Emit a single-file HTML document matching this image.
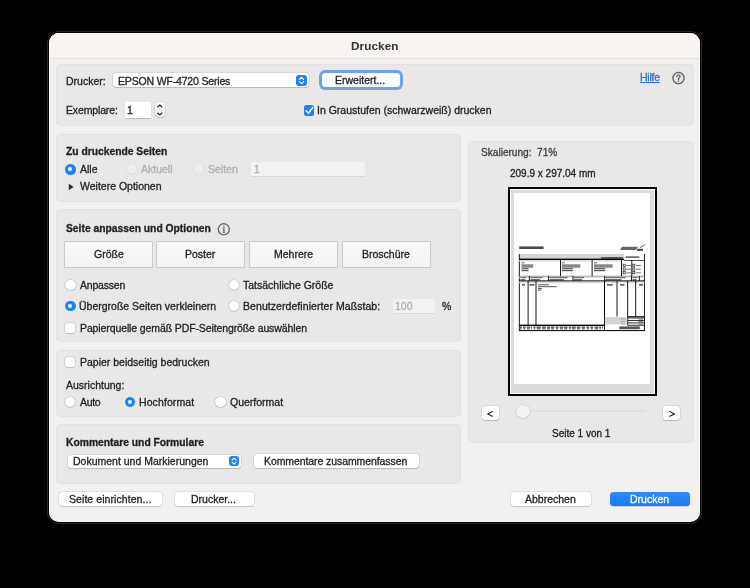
<!DOCTYPE html>
<html><head><meta charset="utf-8">
<style>
html,body{margin:0;padding:0;}
body{width:750px;height:588px;background:#000;position:relative;overflow:hidden;font-family:"Liberation Sans",sans-serif;color:#1f1f1f;}
.a{position:absolute;}
.t{position:absolute;font-size:10.5px;line-height:12px;white-space:nowrap;-webkit-text-stroke:0.3px currentColor;will-change:transform;}
.b{font-weight:bold;}
.pan{position:absolute;background:#e9e8e6;border-radius:5px;box-shadow:inset 0 0 0 0.8px rgba(0,0,0,0.03);}
.radio{position:absolute;border-radius:50%;background:#fff;box-shadow:0 0 0 0.6px rgba(0,0,0,0.18),0 0.5px 1px rgba(0,0,0,0.12);}
.radio.on{background:#1a82fb;box-shadow:none;}
.radio.on::after{content:"";position:absolute;left:3.3px;top:3.3px;width:4px;height:4px;border-radius:50%;background:#fff;}
.radio.off{background:#efeeed;box-shadow:0 0 0 0.6px rgba(0,0,0,0.08);}
.chk{position:absolute;border-radius:2.5px;background:#fff;box-shadow:0 0 0 0.6px rgba(0,0,0,0.16),0 0.5px 1px rgba(0,0,0,0.1);}
.btn{position:absolute;background:#fff;border-radius:3.5px;box-shadow:0 0 0 0.5px rgba(0,0,0,0.14),0 1px 1px rgba(0,0,0,0.14);}
.seg{position:absolute;background:linear-gradient(#f8f8f8,#f3f3f3);border:1px solid #c9c9c9;box-sizing:border-box;}
.dis{color:#b0afae;}
</style></head><body>
<div class="a" style="left:49px;top:33px;width:651px;height:489px;border-radius:10px;background:#f2f1ef;box-shadow:0 0 0 1px #000,0 0 0 2px #262626;"></div>
<div class="a" style="left:49px;top:33px;width:651px;height:25px;border-radius:10px 10px 0 0;background:#f7f4f1;border-bottom:1px solid #e2dfdc;"></div>
<div class="a" style="left:49px;top:33px;width:651px;height:489px;border-radius:10px;box-shadow:inset 0 0 0 0.8px rgba(255,255,255,0.7);box-sizing:border-box;"></div>
<div class="t b" style="left:351px;top:40px;font-size:11.7px;color:#333;-webkit-text-stroke:0;letter-spacing:0.1px;">Drucken</div>
<div class="pan" style="left:56px;top:64px;width:638px;height:62px;"></div>
<div class="t" style="left:66px;top:75px;">Drucker:</div>
<div class="btn" style="left:113px;top:73px;width:195.8px;height:14px;"></div>
<div class="a" style="left:296px;top:74.5px;width:11px;height:11px;border-radius:3px;background:#1a82fb;"></div>
<svg class="a" style="left:296px;top:74.5px" width="11" height="11"><path d="M3.4 4.3 L5.5 2.4 L7.6 4.3 M3.4 6.7 L5.5 8.6 L7.6 6.7" stroke="#fff" stroke-width="1.1" fill="none" stroke-linecap="round" stroke-linejoin="round"/></svg>
<div class="t" style="left:118px;top:75px;letter-spacing:-0.17px;">EPSON WF-4720 Series</div>
<div class="a" style="left:318.5px;top:70px;width:84px;height:19.5px;border-radius:6px;background:#6fa2e8;"></div>
<div class="a" style="left:321.5px;top:73px;width:78.5px;height:13.7px;border-radius:3.5px;background:#fff;"></div>
<div class="t" style="left:335px;top:74px;">Erweitert...</div>
<div class="t" style="left:640px;top:71px;color:#2c72d9;letter-spacing:-0.25px;text-decoration:underline;">Hilfe</div>
<svg class="a" style="left:668px;top:68px" width="22" height="20" viewBox="668 68 22 20"><circle cx="678.5" cy="78.1" r="5.6" stroke="#676767" stroke-width="1.45" fill="none"/><path d="M676.8 76.6 Q676.9 75 678.5 75 Q680.1 75 680.1 76.5 Q680.1 77.4 679.1 78 Q678.5 78.4 678.5 79.3 V79.7" stroke="#555" stroke-width="1.15" fill="none" stroke-linecap="round"/><circle cx="678.5" cy="81.2" r="0.7" fill="#555"/></svg>
<div class="t" style="left:65.8px;top:104px;letter-spacing:-0.14px;">Exemplare:</div>
<div class="a" style="left:124.5px;top:102px;width:26px;height:16px;background:#fff;box-shadow:0 0.5px 1px rgba(0,0,0,0.2);"></div>
<div class="t" style="left:127px;top:104px;">1</div>
<div class="btn" style="left:155px;top:102px;width:9.6px;height:15.4px;border-radius:4px;"></div>
<svg class="a" style="left:155px;top:102px" width="10" height="16"><path d="M2.6 5 L4.8 3 L7 5 M2.6 11 L4.8 13 L7 11" stroke="#222" stroke-width="1.1" fill="none" stroke-linecap="round" stroke-linejoin="round"/><path d="M0.5 7.5 H9.5" stroke="#e4e4e4" stroke-width="0.6"/></svg>
<div class="a" style="left:303.5px;top:104.8px;width:10.7px;height:10.8px;border-radius:2.5px;background:#1a82fb;"></div>
<svg class="a" style="left:303.5px;top:104.8px" width="11" height="11"><path d="M2.1 5.9 L4.5 8.3 L8.6 2.5" stroke="#fff" stroke-width="1.5" fill="none" stroke-linecap="round" stroke-linejoin="round"/></svg>
<div class="t" style="left:317.4px;top:104px;">In Graustufen (schwarzweiß) drucken</div>
<div class="pan" style="left:56px;top:133.5px;width:405px;height:68px;"></div>
<div class="t b" style="left:66px;top:146px;font-size:10.3px;">Zu druckende Seiten</div>
<div class="radio on" style="left:65px;top:164px;width:10.6px;height:10.6px;"></div>
<div class="t" style="left:79.5px;top:163px;">Alle</div>
<div class="radio off" style="left:126.5px;top:164px;width:10px;height:10px;"></div>
<div class="t dis" style="left:141px;top:163px;">Aktuell</div>
<div class="radio off" style="left:194px;top:164px;width:10px;height:10px;"></div>
<div class="t dis" style="left:208px;top:163px;">Seiten</div>
<div class="a" style="left:250.8px;top:162px;width:114.2px;height:14.2px;background:#f4f3f2;box-shadow:0 0.5px 0.6px rgba(0,0,0,0.07);"></div>
<div class="t dis" style="left:254px;top:163px;">1</div>
<svg class="a" style="left:68px;top:183px" width="7" height="8"><path d="M0.8 0.8 L5.6 3.9 L0.8 7 Z" fill="#262626"/></svg>
<div class="t" style="left:80px;top:180px;">Weitere Optionen</div>
<div class="pan" style="left:56px;top:209px;width:405px;height:133px;"></div>
<div class="t b" style="left:66px;top:223px;font-size:10.3px;">Seite anpassen und Optionen</div>
<svg class="a" style="left:214px;top:220px" width="20" height="20" viewBox="214 220 20 20"><circle cx="223.8" cy="229.3" r="5.55" stroke="#6a6a6a" stroke-width="1.4" fill="none"/><rect x="223.1" y="226" width="1.5" height="1.4" fill="#666"/><path d="M222.5 228.2 H224.6 V232.3 H225.2 V233 H222.6 V232.3 H223.2 V228.9 H222.5 Z" fill="#666"/></svg>
<div class="seg" style="left:64px;top:241px;width:89px;height:26.5px;border-radius:1px;"></div>
<div class="t" style="left:94px;top:248px;">Größe</div>
<div class="seg" style="left:156px;top:241px;width:89px;height:26.5px;border-radius:1px;"></div>
<div class="t" style="left:185px;top:248px;">Poster</div>
<div class="seg" style="left:249px;top:241px;width:89px;height:26.5px;border-radius:1px;"></div>
<div class="t" style="left:274px;top:248px;">Mehrere</div>
<div class="seg" style="left:341.5px;top:241px;width:89px;height:26.5px;border-radius:1px;"></div>
<div class="t" style="left:362px;top:248px;">Broschüre</div>
<div class="radio" style="left:65.2px;top:279.5px;width:10.4px;height:10.4px;"></div>
<div class="t" style="left:79.6px;top:279px;letter-spacing:-0.2px;">Anpassen</div>
<div class="radio" style="left:228.7px;top:279.5px;width:10.4px;height:10.4px;"></div>
<div class="t" style="left:242.8px;top:279px;">Tatsächliche Größe</div>
<div class="radio on" style="left:65.2px;top:300.7px;width:10.6px;height:10.6px;"></div>
<div class="t" style="left:79.3px;top:300px;">Übergroße Seiten verkleinern</div>
<div class="radio" style="left:228.7px;top:300.7px;width:10.4px;height:10.4px;"></div>
<div class="t" style="left:242.6px;top:300px;letter-spacing:0.065px;">Benutzerdefinierter Maßstab:</div>
<div class="a" style="left:392.5px;top:299px;width:42.5px;height:14.2px;background:#f4f3f2;box-shadow:0 0.5px 0.6px rgba(0,0,0,0.07);"></div>
<div class="t dis" style="left:395px;top:300px;">100</div>
<div class="t" style="left:441.5px;top:300px;">%</div>
<div class="chk" style="left:65.3px;top:323.3px;width:10px;height:10px;"></div>
<div class="t" style="left:79.6px;top:322px;letter-spacing:-0.11px;">Papierquelle gemäß PDF-Seitengröße auswählen</div>
<div class="pan" style="left:56px;top:349.5px;width:405px;height:67px;"></div>
<div class="chk" style="left:65.3px;top:357.2px;width:10px;height:10px;"></div>
<div class="t" style="left:79.8px;top:356px;">Papier beidseitig bedrucken</div>
<div class="t" style="left:66px;top:379px;">Ausrichtung:</div>
<div class="radio" style="left:65px;top:396.7px;width:10.4px;height:10.4px;"></div>
<div class="t" style="left:79.8px;top:396px;letter-spacing:-0.3px;">Auto</div>
<div class="radio on" style="left:124.9px;top:396.7px;width:10.6px;height:10.6px;"></div>
<div class="t" style="left:139px;top:396px;letter-spacing:0.1px;">Hochformat</div>
<div class="radio" style="left:215.4px;top:396.7px;width:10.4px;height:10.4px;"></div>
<div class="t" style="left:229.8px;top:396px;">Querformat</div>
<div class="pan" style="left:56px;top:424px;width:405px;height:59.5px;"></div>
<div class="t b" style="left:66px;top:437px;font-size:10.3px;">Kommentare und Formulare</div>
<div class="btn" style="left:67.5px;top:454.5px;width:173.5px;height:13.5px;"></div>
<div class="a" style="left:229px;top:455.8px;width:10.2px;height:10.2px;border-radius:3px;background:#1a82fb;"></div>
<svg class="a" style="left:229px;top:455.8px" width="11" height="11"><path d="M3.1 4 L5.1 2.2 L7.1 4 M3.1 6.2 L5.1 8 L7.1 6.2" stroke="#fff" stroke-width="1.05" fill="none" stroke-linecap="round" stroke-linejoin="round"/></svg>
<div class="t" style="left:73px;top:455px;">Dokument und Markierungen</div>
<div class="btn" style="left:253.5px;top:454px;width:165px;height:14.3px;"></div>
<div class="t" style="left:263.7px;top:455px;letter-spacing:-0.085px;">Kommentare zusammenfassen</div>
<div class="pan" style="left:468px;top:140.5px;width:226px;height:302px;"></div>
<div class="t" style="left:480.7px;top:147px;font-size:10.1px;color:#3d3d3d;">Skalierung:&nbsp; 71%</div>
<div class="t" style="left:509.7px;top:168px;font-size:10px;">209.9 x 297.04 mm</div>
<div class="a" style="left:508px;top:187px;width:145px;height:205px;border:2px solid #000;background:#fff;"></div>
<div class="a" style="left:511px;top:190px;width:143px;height:203px;background:#dcdcdc;"></div>
<div class="a" style="left:514px;top:193px;width:136.3px;height:190.5px;background:#fff;"></div>
<svg class="a" style="left:514px;top:193px" width="137" height="191" viewBox="514 193 137 191"><rect x="519.3" y="246.4" width="24.3" height="2.6" fill="#4a4a4a"/><path d="M620 250 L622 246.8 L638 246.8 L636 250 Z" fill="#666"/><rect x="637" y="248.8" width="6" height="2" fill="#444"/><path d="M640 247.5 Q643 246 645 244.8" stroke="#444" stroke-width="0.8" fill="none"/><rect x="519.3" y="254" width="104.6" height="5" fill="#d6d6d6"/><rect x="601" y="257" width="22" height="1.8" fill="#555"/><rect x="519.3" y="258.6" width="104.6" height="1.5" fill="#000"/><rect x="625.7" y="256.3" width="13.6" height="1.6" fill="#666"/><rect x="518.8499999999999" y="254" width="0.9" height="77" fill="#000"/><rect x="643.9499999999999" y="254" width="0.9" height="77" fill="#000"/><rect x="623.9" y="260.25" width="20.5" height="0.7" fill="#000"/><rect x="519.3" y="260.2" width="104.6" height="1.4" fill="#dedede"/><rect x="560.05" y="260" width="0.9" height="16.399999999999977" fill="#000"/><rect x="591.65" y="260" width="0.9" height="16.399999999999977" fill="#000"/><rect x="621.05" y="260" width="0.9" height="16.399999999999977" fill="#000"/><rect x="631.3499999999999" y="260" width="0.9" height="16.399999999999977" fill="#000"/><rect x="521.5" y="262.4" width="3" height="0.9" fill="#555"/><rect x="521.5" y="264.5" width="11.7" height="1.2" fill="#555"/><rect x="521.5" y="266.3" width="11.7" height="1.2" fill="#555"/><rect x="521.5" y="268.1" width="7.02" height="1.2" fill="#555"/><rect x="521.5" y="270" width="7.02" height="1.2" fill="#555"/><rect x="561.8" y="262.4" width="3" height="0.9" fill="#555"/><rect x="561.8" y="264.5" width="18.5" height="1.2" fill="#555"/><rect x="561.8" y="266.3" width="18.5" height="1.2" fill="#555"/><rect x="561.8" y="268.1" width="11.1" height="1.2" fill="#555"/><rect x="561.8" y="270" width="11.1" height="1.2" fill="#555"/><rect x="594" y="262.4" width="3" height="0.9" fill="#555"/><rect x="594" y="264.5" width="18.7" height="1.2" fill="#555"/><rect x="594" y="266.3" width="18.7" height="1.2" fill="#555"/><rect x="594" y="268.1" width="11.219999999999999" height="1.2" fill="#555"/><rect x="594" y="270" width="11.219999999999999" height="1.2" fill="#555"/><rect x="623.2" y="264.2" width="2" height="2.2" fill="none" stroke="#222" stroke-width="0.7"/><rect x="626.2" y="265.0" width="5" height="0.9" fill="#666"/><rect x="623.2" y="267.9" width="2" height="2.2" fill="none" stroke="#222" stroke-width="0.7"/><rect x="626.2" y="268.7" width="5" height="0.9" fill="#666"/><rect x="623.2" y="271.6" width="2" height="2.2" fill="none" stroke="#222" stroke-width="0.7"/><rect x="626.2" y="272.40000000000003" width="5" height="0.9" fill="#666"/><rect x="632.8" y="264.2" width="2" height="2.2" fill="none" stroke="#222" stroke-width="0.7"/><rect x="635.8" y="265.0" width="5" height="0.9" fill="#666"/><rect x="632.8" y="267.9" width="2" height="2.2" fill="none" stroke="#222" stroke-width="0.7"/><rect x="635.8" y="268.7" width="5" height="0.9" fill="#666"/><rect x="632.8" y="271.6" width="2" height="2.2" fill="none" stroke="#222" stroke-width="0.7"/><rect x="635.8" y="272.40000000000003" width="5" height="0.9" fill="#666"/><rect x="519.3" y="275.9" width="125.10000000000002" height="0.6" fill="#000"/><rect x="519.3" y="276.5" width="125" height="1.5" fill="#e6e6e6"/><rect x="528.8499999999999" y="276" width="0.9" height="5" fill="#000"/><rect x="547.9499999999999" y="276" width="0.9" height="5" fill="#000"/><rect x="572.55" y="276" width="0.9" height="5" fill="#000"/><rect x="604.25" y="276" width="0.9" height="5" fill="#000"/><rect x="630.9499999999999" y="276" width="0.9" height="5" fill="#000"/><rect x="638.8499999999999" y="276" width="0.9" height="5" fill="#000"/><rect x="520.5" y="277.2" width="6" height="1" fill="#555"/><rect x="520.5" y="279.3" width="4.800000000000001" height="1.1" fill="#333"/><rect x="530.5" y="277.2" width="12" height="1" fill="#555"/><rect x="530.5" y="279.3" width="9.600000000000001" height="1.1" fill="#333"/><rect x="549.5" y="277.2" width="18" height="1" fill="#555"/><rect x="549.5" y="279.3" width="14.4" height="1.1" fill="#333"/><rect x="574" y="277.2" width="10" height="1" fill="#555"/><rect x="574" y="279.3" width="8.0" height="1.1" fill="#333"/><rect x="605.5" y="277.2" width="20" height="1" fill="#555"/><rect x="605.5" y="279.3" width="16.0" height="1.1" fill="#333"/><rect x="632.5" y="277.2" width="5" height="1" fill="#555"/><rect x="632.5" y="279.3" width="4.0" height="1.1" fill="#333"/><rect x="519.3" y="280.4" width="125.10000000000002" height="1.2" fill="#000"/><rect x="519.3" y="281.6" width="125" height="1.7" fill="#dcdcdc"/><rect x="527.65" y="281" width="0.9" height="44.19999999999999" fill="#000"/><rect x="535.55" y="281" width="0.9" height="44.19999999999999" fill="#000"/><rect x="604.05" y="281" width="0.9" height="44.19999999999999" fill="#000"/><rect x="627.25" y="281" width="0.9" height="44.19999999999999" fill="#000"/><rect x="616.55" y="281" width="0.9" height="35.5" fill="#000"/><rect x="635.25" y="281" width="0.9" height="35.5" fill="#000"/><rect x="604.05" y="281" width="0.9" height="50" fill="#000"/><rect x="522" y="284.2" width="3" height="1.4" fill="#444"/><rect x="529.5" y="284.2" width="5" height="1.4" fill="#444"/><rect x="607" y="284.2" width="5.7" height="1.4" fill="#444"/><rect x="620" y="284.2" width="4.4" height="1.4" fill="#444"/><rect x="639" y="284.2" width="4" height="1.4" fill="#444"/><rect x="537.9" y="284.2" width="11" height="1.1" fill="#666"/><rect x="537.9" y="286.1" width="18.7" height="1.1" fill="#666"/><rect x="537.9" y="288" width="4" height="1.1" fill="#666"/><rect x="537.9" y="289.6" width="3" height="1.1" fill="#666"/><rect x="604.8" y="317" width="22.4" height="7.4" fill="#d4d4d4"/><rect x="627.7" y="316.1" width="16.699999999999932" height="0.8" fill="#000"/><rect x="627.7" y="317.4" width="16.699999999999932" height="1.0" fill="#000"/><rect x="627.7" y="320.0" width="16.699999999999932" height="0.8" fill="#000"/><rect x="627.7" y="322.5" width="16.699999999999932" height="0.8" fill="#000"/><rect x="627.7" y="324.8" width="16.699999999999932" height="0.8" fill="#000"/><rect x="638.5" y="318.6" width="4.5" height="0.9" fill="#666"/><rect x="621" y="318.6" width="4" height="0.8" fill="#999"/><rect x="638.5" y="321.2" width="4.5" height="0.9" fill="#666"/><rect x="621" y="321.2" width="4" height="0.8" fill="#999"/><rect x="638.5" y="323.6" width="4.5" height="0.9" fill="#666"/><rect x="621" y="323.6" width="4" height="0.8" fill="#999"/><rect x="519.3" y="324.6" width="85.20000000000005" height="1.4" fill="#000"/><rect x="519.8" y="326.5" width="2.21" height="1.3" fill="#444"/><rect x="520.1" y="328.2" width="1.61" height="1.2" fill="#555"/><rect x="522.99" y="326.5" width="2.61" height="1.3" fill="#444"/><rect x="523.29" y="328.2" width="2.01" height="1.2" fill="#555"/><rect x="526.63" y="326.5" width="3.38" height="1.3" fill="#444"/><rect x="526.93" y="328.2" width="2.78" height="1.2" fill="#555"/><rect x="530.65" y="326.5" width="1.54" height="1.3" fill="#444"/><rect x="530.95" y="328.2" width="0.94" height="1.2" fill="#555"/><rect x="533.38" y="326.5" width="2.28" height="1.3" fill="#444"/><rect x="533.68" y="328.2" width="1.68" height="1.2" fill="#555"/><rect x="536.42" y="326.5" width="4.49" height="1.3" fill="#444"/><rect x="536.72" y="328.2" width="3.89" height="1.2" fill="#555"/><rect x="541.83" y="326.5" width="4.01" height="1.3" fill="#444"/><rect x="542.13" y="328.2" width="3.41" height="1.2" fill="#555"/><rect x="546.78" y="326.5" width="3.42" height="1.3" fill="#444"/><rect x="547.08" y="328.2" width="2.82" height="1.2" fill="#555"/><rect x="550.9" y="326.5" width="3.4" height="1.3" fill="#444"/><rect x="551.2" y="328.2" width="2.8" height="1.2" fill="#555"/><rect x="555.51" y="326.5" width="3.07" height="1.3" fill="#444"/><rect x="555.81" y="328.2" width="2.47" height="1.2" fill="#555"/><rect x="559.7" y="326.5" width="3.51" height="1.3" fill="#444"/><rect x="560.0" y="328.2" width="2.91" height="1.2" fill="#555"/><rect x="563.86" y="326.5" width="3.77" height="1.3" fill="#444"/><rect x="564.16" y="328.2" width="3.17" height="1.2" fill="#555"/><rect x="568.65" y="326.5" width="2.4" height="1.3" fill="#444"/><rect x="568.95" y="328.2" width="1.8" height="1.2" fill="#555"/><rect x="571.67" y="326.5" width="4.1" height="1.3" fill="#444"/><rect x="571.97" y="328.2" width="3.5" height="1.2" fill="#555"/><rect x="576.7" y="326.5" width="3.66" height="1.3" fill="#444"/><rect x="577.0" y="328.2" width="3.06" height="1.2" fill="#555"/><rect x="581.57" y="326.5" width="3.64" height="1.3" fill="#444"/><rect x="581.87" y="328.2" width="3.04" height="1.2" fill="#555"/><rect x="586.46" y="326.5" width="2.68" height="1.3" fill="#444"/><rect x="586.76" y="328.2" width="2.08" height="1.2" fill="#555"/><rect x="590.31" y="326.5" width="2.83" height="1.3" fill="#444"/><rect x="590.61" y="328.2" width="2.23" height="1.2" fill="#555"/><rect x="594.39" y="326.5" width="4.14" height="1.3" fill="#444"/><rect x="594.69" y="328.2" width="3.54" height="1.2" fill="#555"/><rect x="599.2" y="326.5" width="1.91" height="1.3" fill="#444"/><rect x="599.5" y="328.2" width="1.31" height="1.2" fill="#555"/><rect x="601.86" y="326.5" width="1.14" height="1.3" fill="#444"/><rect x="602.16" y="328.2" width="0.54" height="1.2" fill="#555"/><rect x="619.3" y="326.4" width="20.5" height="2.8" fill="#555"/><rect x="519.3" y="330.1" width="125.10000000000002" height="1" fill="#000"/></svg>
<div class="btn" style="left:481.6px;top:406px;width:17px;height:14px;border-radius:3px;"></div>
<svg class="a" style="left:481.3px;top:405.7px" width="18" height="15"><path d="M11.4 5.5 L6.7 7.9 L11.4 10.3" stroke="#222" stroke-width="1.1" fill="none" stroke-linecap="round" stroke-linejoin="round"/></svg>
<div class="a" style="left:523px;top:410.3px;width:123px;height:2.2px;border-radius:1px;background:#dfdedd;"></div>
<div class="a" style="left:516.3px;top:404.8px;width:13.3px;height:13.3px;border-radius:50%;background:#f3f2f1;box-shadow:0 0 0 0.5px rgba(0,0,0,0.12),0 0.5px 1px rgba(0,0,0,0.1);"></div>
<div class="btn" style="left:663.3px;top:406px;width:17px;height:14px;border-radius:3px;"></div>
<svg class="a" style="left:663px;top:405.7px" width="18" height="15"><path d="M6.8 5.5 L11.5 7.9 L6.8 10.3" stroke="#222" stroke-width="1.1" fill="none" stroke-linecap="round" stroke-linejoin="round"/></svg>
<div class="t" style="left:552px;top:428px;font-size:10px;">Seite 1 von 1</div>
<div class="btn" style="left:59px;top:492px;width:103px;height:14px;"></div>
<div class="t" style="left:69.2px;top:493px;letter-spacing:0.07px;">Seite einrichten...</div>
<div class="btn" style="left:174.6px;top:492px;width:79px;height:14px;"></div>
<div class="t" style="left:191.4px;top:493px;">Drucker...</div>
<div class="btn" style="left:511.2px;top:492px;width:80px;height:14px;"></div>
<div class="t" style="left:525.3px;top:493px;">Abbrechen</div>
<div class="a" style="left:610px;top:492px;width:80px;height:14px;border-radius:3.5px;background:linear-gradient(#2a8bfc,#1a7bf6);box-shadow:0 0.5px 1px rgba(0,0,0,0.15);"></div>
<div class="t" style="left:630px;top:493px;color:#fff;">Drucken</div>
</body></html>
